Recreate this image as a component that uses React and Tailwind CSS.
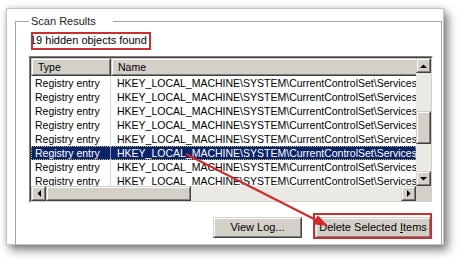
import React from "react";

const FONT = { fontFamily: '"Liberation Sans", Arial, sans-serif' };

function Raised({ className = "", innerClassName = "", children }) {
  return (
    <div className={"border border-t-[#d4d0c8] border-l-[#d4d0c8] border-r-[#404040] border-b-[#404040] bg-[#d4d0c8] " + className}>
      <div className={"w-full h-full border border-t-white border-l-white border-r-[#808080] border-b-[#808080] " + innerClassName}>
        {children}
      </div>
    </div>
  );
}

function Tri({ dir }) {
  const pts = {
    up: "0,4 7,4 3.5,0.5",
    down: "0,0 7,0 3.5,3.5",
    left: "4,0 4,7 0.5,3.5",
    right: "0,0 0,7 3.5,3.5",
  }[dir];
  const vert = dir === "up" || dir === "down";
  return (
    <svg width={vert ? 7 : 4} height={vert ? 4 : 7} viewBox={vert ? "0 0 7 4" : "0 0 4 7"}>
      <polygon points={pts} fill="#000" />
    </svg>
  );
}

function ScrollBtn({ dir }) {
  return (
    <Raised className="w-[15px] h-[15px] shrink-0" innerClassName="flex items-center justify-center">
      <Tri dir={dir} />
    </Raised>
  );
}

const rows = Array.from({ length: 8 }, (_, i) => i);
const PATH = "HKEY_LOCAL_MACHINE\\SYSTEM\\CurrentControlSet\\Services\\";

export default function App() {
  return (
    <div className="relative w-[459px] h-[260px] bg-white overflow-hidden pt-[8px] pl-[6px]" style={FONT}>
      {/* panel */}
      <div className="w-[438px] h-[237px] bg-white border border-[#c4c4c4] shadow-[4px_5px_9px_rgba(0,0,0,0.5),0_0_5px_rgba(0,0,0,0.15)] overflow-hidden">
        {/* group box */}
        <div className="relative ml-[8px] mt-[12px] w-[427px] h-[230px] border-l border-t border-r border-[#a4a4a4]">
          <div className="absolute left-[13px] top-[-7px] w-[84px] pl-[2px] bg-white text-[11px] leading-[13px] text-[#222]">
            Scan Results
          </div>

          {/* status */}
          <div className="relative ml-[14px] mt-[12px] h-[13px] text-[11px] leading-[13px] text-black whitespace-nowrap">
            19 hidden objects found
            <div className="absolute left-[1px] top-[-2px] w-[120px] h-[18px] border-2 border-[#c8312f]" />
          </div>

          {/* list view */}
          <div className="ml-[13px] mt-[9px] w-[404px] h-[147px] border border-t-[#808080] border-l-[#808080] border-r-white border-b-white">
            <div className="w-full h-full border border-t-[#404040] border-l-[#404040] border-r-[#d4d0c8] border-b-[#d4d0c8] bg-white grid grid-cols-[385px_15px] grid-rows-[128px_15px]">
              {/* list area */}
              <div className="overflow-hidden text-[10.5px] text-black">
                <div className="flex h-[18px] bg-[#d4d0c8]">
                  <Raised className="w-[80px] h-[18px] shrink-0" innerClassName="flex items-center pl-[5px] leading-[14px]">
                    Type
                  </Raised>
                  <Raised className="w-[400px] h-[18px] shrink-0" innerClassName="flex items-center pl-[5px] leading-[14px]">
                    Name
                  </Raised>
                </div>
                {rows.map((i) => {
                  const sel = i === 5;
                  return (
                    <div
                      key={i}
                      className={
                        "flex h-[14px] leading-[14px] whitespace-nowrap " +
                        (sel ? "bg-[#0a246a] text-white outline-1 outline-dotted outline-offset-[-1px] outline-[#c9b26a]" : "")
                      }
                    >
                      <div className={"w-[80px] shrink-0 pl-[4px] border-r " + (sel ? "border-[#8a94b8]" : "border-[#d8d8d8]")}>
                        Registry entry
                      </div>
                      <div className="pl-[6px]">{PATH + "Svc" + (i + 1)}</div>
                    </div>
                  );
                })}
              </div>

              {/* vertical scrollbar */}
              <div className="flex flex-col bg-[#ebe9e3]">
                <ScrollBtn dir="up" />
                <div className="h-[38px]" />
                <Raised className="w-[15px] h-[33px]" />
                <div className="flex-1" />
                <ScrollBtn dir="down" />
              </div>

              {/* horizontal scrollbar */}
              <div className="flex bg-[#ebe9e3]">
                <ScrollBtn dir="left" />
                <Raised className="w-[145px] h-[15px] shrink-0" />
                <div className="flex-1" />
                <ScrollBtn dir="right" />
              </div>

              {/* corner */}
              <div className="bg-[#d4d0c8]" />
            </div>
          </div>

          {/* buttons */}
          <div className="flex justify-end items-start gap-[13px] mt-[14px] mr-[10px] text-[11px] text-black">
            <Raised className="w-[89px] h-[21px]" innerClassName="flex items-center justify-center leading-[13px]">
              View Log...
            </Raised>
            <div className="relative">
              <Raised className="w-[116px] h-[21px]" innerClassName="flex items-center justify-center leading-[13px]">
                <span>
                  Delete Selected <span className="underline underline-offset-[1px]">I</span>tems
                </span>
              </Raised>
              <div className="absolute left-[-2px] top-[-4px] right-[-1px] bottom-[-1px] border-2 border-[#c8312f]" />
            </div>
          </div>
        </div>
      </div>

      {/* annotation arrow */}
      <svg className="absolute left-0 top-0 pointer-events-none" width="459" height="260" viewBox="0 0 459 260">
        <line x1="186" y1="154" x2="316" y2="220" stroke="#d22a2a" strokeWidth="2" />
        <polygon points="328,226 313.2,224.2 317.8,215.2" fill="#d22a2a" />
      </svg>
    </div>
  );
}
